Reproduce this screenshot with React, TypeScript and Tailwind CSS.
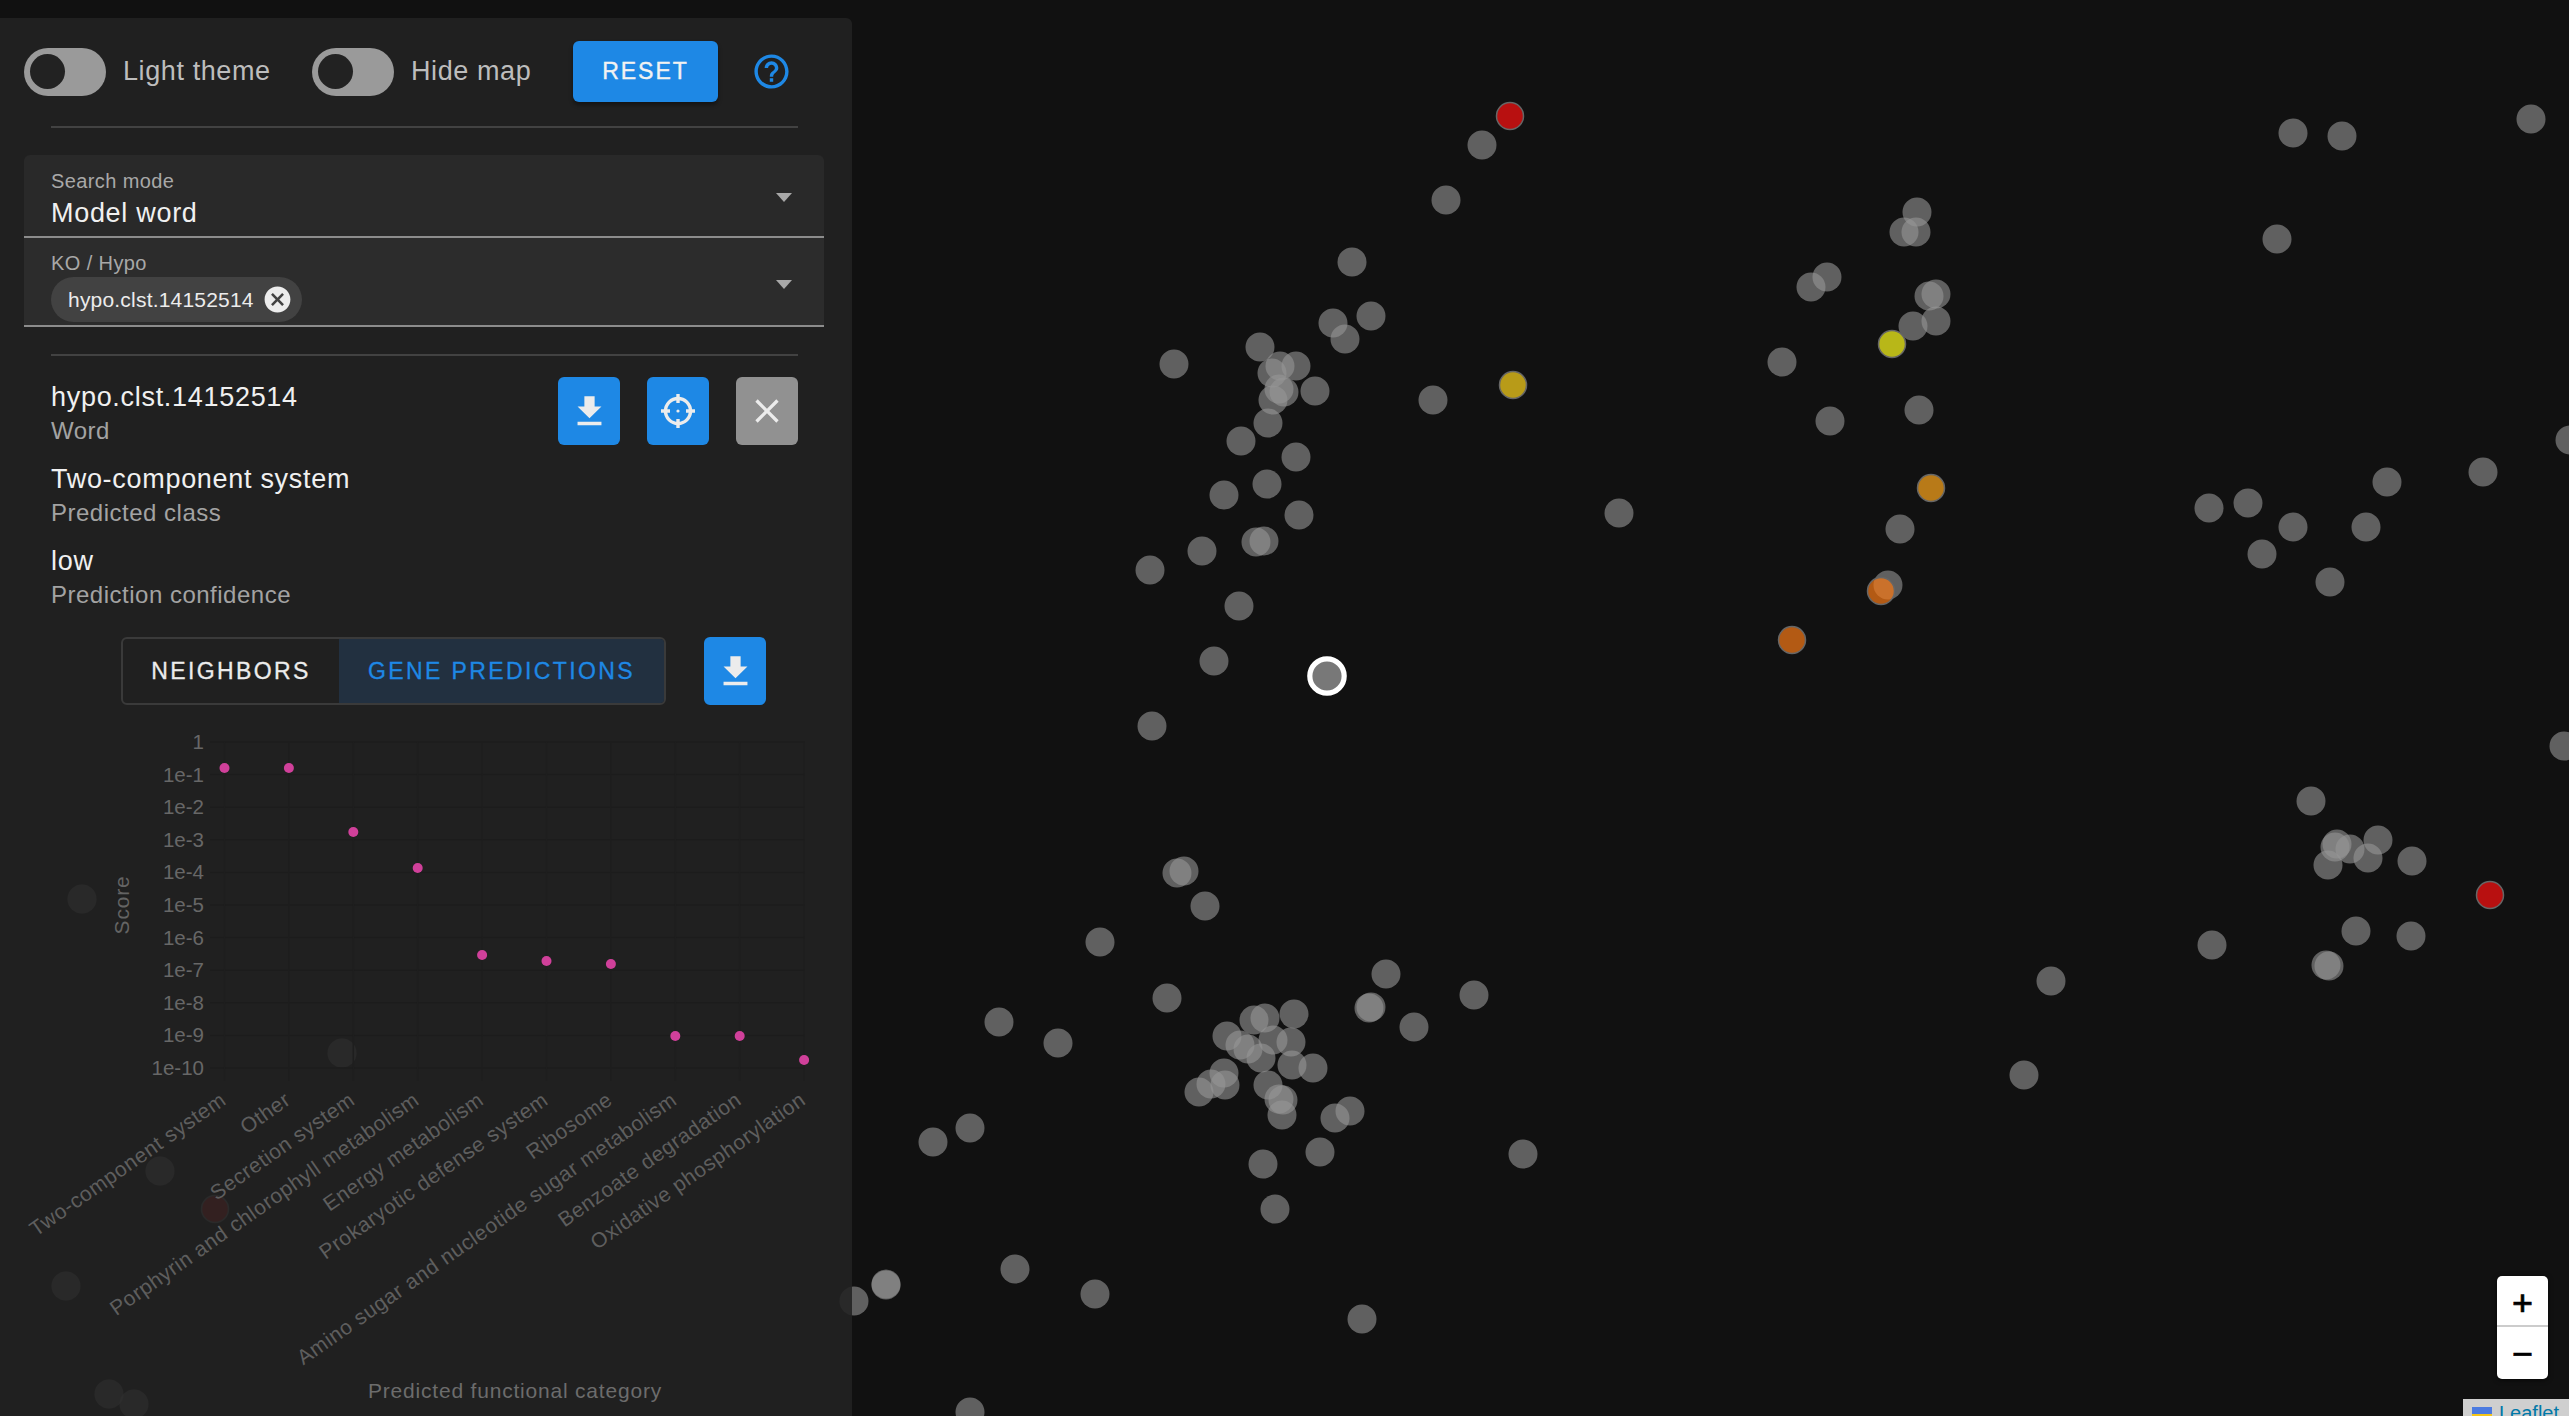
import { MdCancel, MdClose, MdFileDownload, MdHelpOutline } from "react-icons/md";

type Dot = [number, number];

// map points in page pixels
const grayDots: Dot[] = [
  [1482, 145], [1446, 200], [1352, 262], [1371, 316], [1333, 323], [1345, 339], [1174, 364], [1260, 347],
  [1280, 366], [1296, 366], [1272, 373], [1279, 389], [1284, 392], [1315, 391], [1273, 400], [1268, 423],
  [1241, 441], [1296, 457], [1267, 484], [1224, 495], [1299, 515], [1264, 541], [1256, 542], [1202, 551],
  [1150, 570], [1239, 606], [1214, 661], [1433, 400], [1619, 513], [1782, 362], [1811, 287], [1827, 277],
  [1917, 212], [1904, 232], [1916, 232], [1929, 296], [1936, 294], [1913, 326], [1936, 321], [1830, 421],
  [1919, 410], [1900, 529], [1888, 585], [1152, 726], [1184, 871], [1177, 873], [1205, 906], [1100, 942],
  [1167, 998], [999, 1022], [1058, 1043], [1386, 974], [1474, 995], [1371, 1007], [1369, 1008], [1414, 1027],
  [1294, 1014], [1265, 1018], [1254, 1020], [1227, 1036], [1273, 1040], [1291, 1042], [1240, 1045], [1248, 1049],
  [1261, 1058], [1292, 1065], [1313, 1068], [1224, 1073], [1225, 1085], [1211, 1084], [1199, 1092], [1268, 1085],
  [1283, 1100], [1279, 1099], [1282, 1115], [1350, 1111], [1335, 1118], [1320, 1152], [1263, 1164], [1523, 1154],
  [1275, 1209], [970, 1128], [933, 1142], [1015, 1269], [1095, 1294], [886, 1284], [886, 1285], [854, 1301],
  [1362, 1319], [970, 1412], [2293, 133], [2342, 136], [2531, 119], [2277, 239], [2570, 440], [2387, 482],
  [2483, 472], [2209, 508], [2248, 503], [2293, 527], [2366, 527], [2262, 554], [2330, 582], [2564, 746],
  [2311, 801], [2337, 844], [2335, 847], [2350, 849], [2378, 840], [2368, 858], [2328, 865], [2412, 861],
  [2356, 931], [2411, 936], [2212, 945], [2329, 966], [2326, 965], [2051, 981], [2024, 1075],
  // under the panel
  [82, 899], [342, 1053], [160, 1171], [66, 1286], [109, 1394], [134, 1404],
];

const colorDots: { x: number; y: number; fill: string }[] = [
  { x: 1510, y: 116, fill: "#ff1010" },
  { x: 1513, y: 385, fill: "#ffd51b" },
  { x: 1892, y: 344, fill: "#fffd1b" },
  { x: 1931, y: 488, fill: "#ffa71b" },
  { x: 1881, y: 591, fill: "#f87915" },
  { x: 1792, y: 640, fill: "#f87915" },
  { x: 2490, y: 895, fill: "#ff1010" },
  { x: 215, y: 1209, fill: "#ff1010" },
];

const yTicks = ["1", "1e-1", "1e-2", "1e-3", "1e-4", "1e-5", "1e-6", "1e-7", "1e-8", "1e-9", "1e-10"];
const categories = [
  "Two-component system",
  "Other",
  "Secretion system",
  "Porphyrin and chlorophyll metabolism",
  "Energy metabolism",
  "Prokaryotic defense system",
  "Ribosome",
  "Amino sugar and nucleotide sugar metabolism",
  "Benzoate degradation",
  "Oxidative phosphorylation",
];
const scores = [769, 769, 833, 869, 956, 962, 965, 1037, 1037, 1061];

const xAt = (i: number) => 224.5 + i * 64.4;
const yAt = (i: number) => 743 + i * 32.6;

function Toggle({ label, className }: { label: string; className: string }) {
  return (
    <div className={`flex items-center ${className}`}>
      <div className="flex h-[48px] w-[82px] items-center rounded-full bg-[#9a9a9a] pl-[6px]">
        <div className="h-[35px] w-[35px] rounded-full bg-[#222222]" />
      </div>
      <span className="ml-[17px] text-[27px] tracking-[0.6px] text-[#bdbdbd]">{label}</span>
    </div>
  );
}

function Field({ label, className, arrow, children }: { label: string; className: string; arrow: string; children: React.ReactNode }) {
  return (
    <div className={`relative border-b-2 border-[#8c8c8c] pl-[27px] ${className}`}>
      <div className="text-[20px] leading-[24px] tracking-[0.4px] text-[#a8a8a8]">{label}</div>
      {children}
      <div className={`absolute right-[32px] h-0 w-0 border-x-[8px] border-t-[9px] border-x-transparent border-t-[#a8a8a8] ${arrow}`} />
    </div>
  );
}

function IconButton({ gray, children }: { gray?: boolean; children: React.ReactNode }) {
  return (
    <div
      className={`flex h-[68px] w-[62px] items-center justify-center rounded-[6px] text-[#ececec] ${
        gray ? "bg-[#919191]" : "bg-[#1e88e5]"
      }`}
    >
      {children}
    </div>
  );
}

function Info({ value, label }: { value: string; label: string }) {
  return (
    <div>
      <div className="text-[27px] leading-[34px] tracking-[0.7px] text-[#f0f0f0]">{value}</div>
      <div className="text-[24px] leading-[34px] tracking-[0.5px] text-[#a3a3a3]">{label}</div>
    </div>
  );
}

function ScoreChart() {
  return (
    <svg className="mt-[14px] block" width={852} height={696} viewBox="0 720 852 696" fontFamily="'Liberation Sans', sans-serif">
      {yTicks.map((t, i) => (
        <g key={t}>
          <line x1={210} x2={805} y1={yAt(i)} y2={yAt(i)} stroke="#1c1c1c" strokeWidth={1.5} />
          <text x={204} y={yAt(i) + 7} textAnchor="end" fontSize={20.5} fill="#676767">
            {t}
          </text>
        </g>
      ))}
      {categories.map((c, i) => (
        <g key={c}>
          <line x1={xAt(i)} x2={xAt(i)} y1={743} y2={1082} stroke="#1e1e1e" strokeWidth={1.5} />
          <text
            transform={`translate(${xAt(i) + 3} 1104) rotate(-35)`}
            textAnchor="end"
            fontSize={21}
            letterSpacing={0.6}
            fill="#5e5e5e"
          >
            {c}
          </text>
        </g>
      ))}
      {scores.map((y, i) => (
        <circle key={i} cx={xAt(i)} cy={y} r={5} fill="#d0409a" />
      ))}
      <text transform="translate(129 906) rotate(-90)" textAnchor="middle" fontSize={21} letterSpacing={0.8} fill="#646464">
        Score
      </text>
      <text x={515} y={1399} textAnchor="middle" fontSize={21} letterSpacing={0.8} fill="#6c6c6c">
        Predicted functional category
      </text>
    </svg>
  );
}

export default function App() {
  return (
    <div className="relative h-[1416px] w-[2569px] overflow-hidden bg-[#111111] font-['Liberation_Sans',sans-serif]">
      <svg className="absolute inset-0" width={2569} height={1416}>
        {grayDots.map(([x, y], i) => (
          <circle key={i} cx={x} cy={y} r={14.5} fill="rgb(150,150,150)" fillOpacity={0.6} />
        ))}
        {colorDots.map((d) => (
          <circle key={`${d.x}-${d.y}`} cx={d.x} cy={d.y} r={13.5} fill={d.fill} fillOpacity={0.7} stroke="#666666" strokeWidth={1.5} />
        ))}
        <circle cx={1327} cy={676} r={17.2} fill="#787878" stroke="#ffffff" strokeWidth={5.2} />
      </svg>

      {/* side panel */}
      <div className="absolute left-0 top-[18px] h-[1398px] w-[852px] overflow-hidden rounded-tr-[6px] bg-[rgba(35,35,35,0.89)]">
        <div className="mt-[23px] flex h-[61px] items-center pl-[24px]">
          <Toggle label="Light theme" className="w-[288px]" />
          <Toggle label="Hide map" className="w-[261px]" />
          <div className="flex h-[61px] w-[145px] items-center justify-center rounded-[6px] bg-[#1e88e5] text-[23px] tracking-[2px] text-[#f2f2f2] shadow-[0_3px_4px_rgba(0,0,0,0.4)] [-webkit-text-stroke:0.4px_#f2f2f2]">
            RESET
          </div>
          <MdHelpOutline className="ml-[33px] text-[#1e88e5]" size={41} />
        </div>

        <div className="mx-[51px] mt-[24px] h-[2px] w-[747px] bg-[#424242]" />

        <div className="ml-[24px] mt-[27px] w-[800px]">
          <Field label="Search mode" arrow="top-[38px]" className="h-[83px] rounded-t-[6px] bg-[#292929] pt-[14px]">
            <div className="mt-[4px] text-[27px] leading-[32px] tracking-[0.7px] text-[#f0f0f0]">Model word</div>
          </Field>
          <Field label="KO / Hypo" arrow="top-[42px]" className="h-[89px] bg-[#2c2c2c] pt-[13px]">
            <div className="mt-[2px] flex h-[45px] w-[251px] items-center rounded-full bg-[#424242] pl-[17px]">
              <span className="text-[21px] tracking-[0.2px] text-[#ececec]">hypo.clst.14152514</span>
              <MdCancel className="ml-[8px] text-[#ececec]" size={31} />
            </div>
          </Field>
        </div>

        <div className="mx-[51px] mt-[27px] h-[2px] w-[747px] bg-[#424242]" />

        <div className="flex items-start justify-between pl-[51px] pr-[54px] pt-[21px]">
          <div className="flex flex-col gap-[14px] pt-[3px]">
            <Info value="hypo.clst.14152514" label="Word" />
            <Info value="Two-component system" label="Predicted class" />
            <Info value="low" label="Prediction confidence" />
          </div>
          <div className="flex gap-[27px]">
            <IconButton>
              <MdFileDownload size={41} />
            </IconButton>
            <IconButton>
              <svg width={36} height={36} viewBox="0 0 36 36" fill="none" stroke="currentColor" strokeWidth={3.4}>
                <circle cx={18} cy={18} r={12.5} />
                <path d="M18 1v9M18 26v9M1 18h9M26 18h9" />
                <circle cx={18} cy={18} r={1.6} fill="currentColor" stroke="none" />
              </svg>
            </IconButton>
            <IconButton gray>
              <MdClose size={40} />
            </IconButton>
          </div>
        </div>

        <div className="mt-[25px] flex items-start pl-[121px]">
          <div className="flex h-[68px] w-[545px] overflow-hidden rounded-[6px] border-2 border-[#3a3a3a] text-[23px] tracking-[2.4px] [-webkit-text-stroke:0.3px]">
            <div className="flex w-[216px] items-center justify-center text-[#ececec]">NEIGHBORS</div>
            <div className="flex flex-1 items-center justify-center bg-[#223040] text-[#1e88e5]">GENE PREDICTIONS</div>
          </div>
          <div className="ml-[38px]">
            <IconButton>
              <MdFileDownload size={41} />
            </IconButton>
          </div>
        </div>

        <ScoreChart />
      </div>

      {/* zoom control */}
      <div className="absolute left-[2497px] top-[1276px] flex h-[103px] w-[51px] flex-col overflow-hidden rounded-[5px] bg-white font-['DejaVu_Sans_Mono',monospace] text-[34px] font-normal leading-none text-black shadow-[0_1px_5px_rgba(0,0,0,0.65)] [-webkit-text-stroke:0.6px_#000]">
        <div className="flex h-[51px] items-center justify-center border-b-2 border-[#cccccc] pt-[3px]">+</div>
        <div className="flex flex-1 items-center justify-center">−</div>
      </div>

      {/* attribution */}
      <div className="absolute left-[2463px] top-[1399px] flex h-[17px] w-[106px] items-start overflow-hidden bg-[#cfcfcf] pl-[9px] pt-[8px]">
        <div className="w-[20px] shrink-0">
          <div className="h-[7px] bg-[#4c7be0]" />
          <div className="h-[7px] bg-[#f5c518]" />
        </div>
        <span className="-mt-[6px] ml-[7px] text-[20px] leading-[24px] text-[#0078a8]">Leaflet</span>
      </div>
    </div>
  );
}
